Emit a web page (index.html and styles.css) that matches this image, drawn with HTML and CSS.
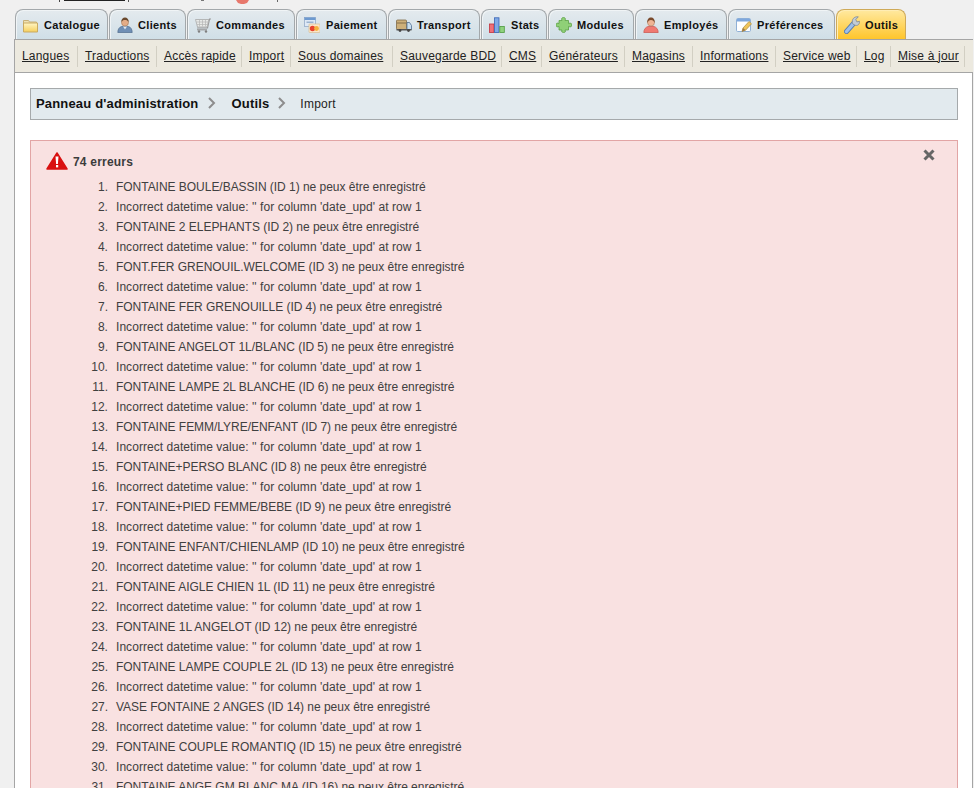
FILE: index.html
```html
<!DOCTYPE html>
<html lang="fr">
<head>
<meta charset="utf-8">
<title>Import - Outils</title>
<link rel="stylesheet" href="styles.css">
</head>
<body>
<svg class="top-strip" width="974" height="9" viewBox="0 0 974 9" aria-hidden="true">
  <rect x="64" y="0" width="61" height="1" fill="#222"/>
  <rect x="59" y="0" width="1" height="2" fill="#444"/>
  <rect x="128" y="0" width="1" height="2" fill="#555"/>
  <rect x="201" y="0" width="3" height="1" fill="#777"/>
  <path d="M236 0h13l-2 3-3 1h-3l-3-1z" fill="#e8786c"/>
  <rect x="277" y="0" width="1" height="2" fill="#666"/>
</svg>
<div class="wrapper">
  <nav class="tabs">
    <a class="tab tab-catalogue" href="#">
      <svg class="ico" viewBox="0 0 16 16"><defs><linearGradient id="gf" x1="0" y1="0" x2="0" y2="1"><stop offset="0" stop-color="#fff6c6"/><stop offset="1" stop-color="#f6cf5c"/></linearGradient></defs><path d="M.5 3.500h5l1 1.500h7v2h-13z" fill="#efe2b4" stroke="#c8b179"/><path d="M.5 6h14v9h-14z" fill="url(#gf)" stroke="#c9aa62"/></svg>
      Catalogue</a>
    <a class="tab tab-clients" href="#">
      <svg class="ico" viewBox="0 0 16 16"><path d="M.8 15.500c0-3.500 1.700-5.500 3.700-6h7c2 .5 3.700 2.500 3.700 6z" fill="#6f8fb5" stroke="#4f6b8c" stroke-width=".7"/><path d="M6 9.500l2 3 2-3z" fill="#dfe6ee"/><circle cx="8" cy="5.500" r="3.500" fill="#e4ac86" stroke="#a57653" stroke-width=".6"/><path d="M4.300 5c0-3 1.600-4.500 3.700-4.500S11.700 2 11.700 5c-1-1.500-2-2-3.700-2S5.300 3.500 4.300 5z" fill="#6b4a2e"/></svg>
      Clients</a>
    <a class="tab tab-commandes" href="#">
      <svg class="ico" viewBox="0 0 16 16"><path d="M2 11h10.500l2-9h1.500" fill="none" stroke="#999" stroke-width="1.200"/><path d="M.5 2.500h13.300l-1.700 7.500H2.500z" fill="#e8eae8" stroke="#a8a8a8" stroke-width=".8"/><path d="M1.500 5h11.500M2 7.500h10.500M4.500 3v6.500M7.500 3v6.500M10.500 3v6.500" stroke="#b4b4b4" stroke-width=".7" fill="none"/><path d="M2 12.800h10" stroke="#999" stroke-width="1.200"/><circle cx="4" cy="14.500" r="1.200" fill="#808080"/><circle cx="11" cy="14.500" r="1.200" fill="#808080"/></svg>
      Commandes</a>
    <a class="tab tab-paiement" href="#">
      <svg class="ico" viewBox="0 0 16 16"><rect x=".5" y=".5" width="11" height="9" fill="#dfe9f5" stroke="#8aa3c4" stroke-width=".7"/><rect x=".5" y=".5" width="11" height="2.500" fill="#6d9ad0"/><rect x="2.500" y="4.500" width="7" height="1.500" fill="#9bb3cf"/><rect x="5" y="7" width="11" height="8.500" rx=".7" fill="#fbe6c9" stroke="#d9bd91" stroke-width=".7"/><circle cx="8.500" cy="11.500" r="2.700" fill="#e8432e"/><circle cx="12.500" cy="11.500" r="2.400" fill="#f5b13c"/></svg>
      Paiement</a>
    <a class="tab tab-transport" href="#">
      <svg class="ico" viewBox="0 0 16 16"><rect x=".5" y="3" width="10" height="9.500" rx="1" fill="#cdb07a" stroke="#7d6a46" stroke-width=".8"/><path d="M1 6h9" stroke="#8f7a52" stroke-width="1.200"/><path d="M11 5.500h2.500l2 3v4H11z" fill="#c9dff0" stroke="#4f6f93" stroke-width=".8"/><rect x=".5" y="12" width="15" height="1.500" fill="#555"/><circle cx="4" cy="13.500" r="1.400" fill="#444"/><circle cx="12.500" cy="13.500" r="1.400" fill="#444"/></svg>
      Transport</a>
    <a class="tab tab-stats" href="#">
      <svg class="ico" viewBox="0 0 16 16"><rect x=".5" y="7" width="4.500" height="8.500" fill="#ef6f78" stroke="#c0313c" stroke-width=".8"/><rect x="5.500" y=".8" width="4.500" height="14.700" fill="#7fa9e6" stroke="#3763b4" stroke-width=".8"/><rect x="10.800" y="9.500" width="4.500" height="6" fill="#8fd27e" stroke="#4d9a3e" stroke-width=".8"/></svg>
      Stats</a>
    <a class="tab tab-modules" href="#">
      <svg class="ico" viewBox="0 0 16 16"><path d="M6 3.500c-1-2 0-3 1.500-3s2.500 1 1.500 3h3.500v3c2-1 3.500 0 3.500 1.500s-1.500 2.500-3.500 1.500v3.500H9c1 2 0 2.500-1.500 2.500S5 14.500 6 13H3V9.500c-2 1-3 0-3-1.500s1-2.500 3-1.500v-3z" fill="#8fd077" stroke="#5aa044" stroke-width=".8"/></svg>
      Modules</a>
    <a class="tab tab-employes" href="#">
      <svg class="ico" viewBox="0 0 16 16"><path d="M.8 15.500c0-3.500 2.200-5.500 4.200-6h6c2 .5 4.200 2.500 4.200 6z" fill="#f07a72" stroke="#c9534c" stroke-width=".7"/><circle cx="8" cy="5.500" r="3.500" fill="#efb494" stroke="#b07f62" stroke-width=".6"/><path d="M4.300 6c-.4-3.500 1.400-5.500 3.700-5.500s4.100 2 3.700 5.500c-.7-2-1.700-3-3.700-3S5 4 4.300 6z" fill="#7a4a2c"/></svg>
      Employés</a>
    <a class="tab tab-preferences" href="#">
      <svg class="ico" viewBox="0 0 16 16"><rect x=".5" y="1.500" width="14" height="13" rx="1.200" fill="#fff" stroke="#8fb0d6"/><rect x="1" y="1.800" width="13" height="2.700" fill="#7ea8de"/><path d="M6 14.500l1-3.500 6-6.500 2.500 2.300-6 6.500z" fill="#f0c55a" stroke="#a98a3c" stroke-width=".7"/><path d="M6 14.500l1-3.500 2.500 2.300z" fill="#9a7a4a"/></svg>
      Préférences</a>
    <a class="tab tab-outils active" href="#">
      <svg class="ico ico-tall" viewBox="0 0 16 18"><path d="M2.500 15.500L10 7" stroke="#587cae" stroke-width="5" stroke-linecap="round" fill="none"/><path d="M2.500 15.500L10 7" stroke="#9dbfe9" stroke-width="3.400" stroke-linecap="round" fill="none"/><path d="M8.700 7.800C7.200 3.500 10 .3 14.300.8L11.800 3.500l1.100 2.400 2.600-.6c.3 3.900-3.100 5.700-6.800 2.500z" fill="#c3ccd4" stroke="#7d8894" stroke-width=".8"/></svg>
      Outils</a>
  </nav>
  <div class="subnav">
    <a href="#">Langues</a>
    <a href="#">Traductions</a>
    <a href="#">Accès rapide</a>
    <a href="#">Import</a>
    <a href="#">Sous domaines</a>
    <a href="#">Sauvegarde BDD</a>
    <a href="#">CMS</a>
    <a href="#">Générateurs</a>
    <a href="#">Magasins</a>
    <a href="#">Informations</a>
    <a href="#">Service web</a>
    <a href="#">Log</a>
    <a href="#">Mise à jour</a>
  </div>
  <main class="content">
    <div class="breadcrumb">
      <strong>Panneau d'administration</strong>
      <svg class="chev" viewBox="0 0 10 12"><path d="M2 1l5 5-5 5" fill="none" stroke="#8d8d8d" stroke-width="2"/></svg>
      <strong>Outils</strong>
      <svg class="chev chev-last" viewBox="0 0 10 12"><path d="M2 1l5 5-5 5" fill="none" stroke="#8d8d8d" stroke-width="2"/></svg>
      <span class="crumb-current">Import</span>
    </div>
    <section class="error">
      <svg class="close" viewBox="0 0 12 12"><path d="M1.500 1.500l9 9M10.500 1.500l-9 9" stroke="#666" stroke-width="3"/></svg>
      <h3 class="error-title">
        <svg class="warn" viewBox="0 0 22 18"><path d="M11 1L21 17H1z" fill="#d91010" stroke="#d91010" stroke-width="1.500" stroke-linejoin="round"/><path d="M9.500 4.500h3l-.6 7.500h-1.800z" fill="#fff"/><rect x="10" y="13" width="2.200" height="2.400" fill="#fff"/></svg>
        74 erreurs
      </h3>
      <ol class="error-list">
        <li>FONTAINE BOULE/BASSIN (ID 1) ne peux être enregistré</li>
        <li>Incorrect datetime value: '' for column 'date_upd' at row 1</li>
        <li>FONTAINE 2 ELEPHANTS (ID 2) ne peux être enregistré</li>
        <li>Incorrect datetime value: '' for column 'date_upd' at row 1</li>
        <li>FONT.FER GRENOUIL.WELCOME (ID 3) ne peux être enregistré</li>
        <li>Incorrect datetime value: '' for column 'date_upd' at row 1</li>
        <li>FONTAINE FER GRENOUILLE (ID 4) ne peux être enregistré</li>
        <li>Incorrect datetime value: '' for column 'date_upd' at row 1</li>
        <li>FONTAINE ANGELOT 1L/BLANC (ID 5) ne peux être enregistré</li>
        <li>Incorrect datetime value: '' for column 'date_upd' at row 1</li>
        <li>FONTAINE LAMPE 2L BLANCHE (ID 6) ne peux être enregistré</li>
        <li>Incorrect datetime value: '' for column 'date_upd' at row 1</li>
        <li>FONTAINE FEMM/LYRE/ENFANT (ID 7) ne peux être enregistré</li>
        <li>Incorrect datetime value: '' for column 'date_upd' at row 1</li>
        <li>FONTAINE+PERSO BLANC (ID 8) ne peux être enregistré</li>
        <li>Incorrect datetime value: '' for column 'date_upd' at row 1</li>
        <li>FONTAINE+PIED FEMME/BEBE (ID 9) ne peux être enregistré</li>
        <li>Incorrect datetime value: '' for column 'date_upd' at row 1</li>
        <li>FONTAINE ENFANT/CHIENLAMP (ID 10) ne peux être enregistré</li>
        <li>Incorrect datetime value: '' for column 'date_upd' at row 1</li>
        <li>FONTAINE AIGLE CHIEN 1L (ID 11) ne peux être enregistré</li>
        <li>Incorrect datetime value: '' for column 'date_upd' at row 1</li>
        <li>FONTAINE 1L ANGELOT (ID 12) ne peux être enregistré</li>
        <li>Incorrect datetime value: '' for column 'date_upd' at row 1</li>
        <li>FONTAINE LAMPE COUPLE 2L (ID 13) ne peux être enregistré</li>
        <li>Incorrect datetime value: '' for column 'date_upd' at row 1</li>
        <li>VASE FONTAINE 2 ANGES (ID 14) ne peux être enregistré</li>
        <li>Incorrect datetime value: '' for column 'date_upd' at row 1</li>
        <li>FONTAINE COUPLE ROMANTIQ (ID 15) ne peux être enregistré</li>
        <li>Incorrect datetime value: '' for column 'date_upd' at row 1</li>
        <li>FONTAINE ANGE GM BLANC MA (ID 16) ne peux être enregistré</li>
      </ol>
    </section>
  </main>
</div>
</body>
</html>
```

FILE: styles.css
```css
* { box-sizing: border-box; }
html, body { margin: 0; padding: 0; }
body {
  background: #f0f0f0;
  font-family: "Liberation Sans", Arial, sans-serif;
  font-size: 12px;
  color: #333;
}
.top-strip { display: block; }
.wrapper { margin-left: 14px; width: 959px; }
.tabs { display: flex; padding-left: 1px; height: 30px; }
.tab {
  display: flex;
  align-items: center;
  gap: 5px;
  height: 30px;
  margin-right: 1px;
  padding: 0 0 0 7px;
  border: 1px solid #a3a8ab;
  border-bottom: 0;
  border-radius: 8px 8px 0 0;
  background: linear-gradient(#e4eaee, #d0dfe7);
  box-shadow: inset 1px 1px 0 #f0f4f6;
  color: #111;
  font-size: 11px;
  font-weight: bold;
  letter-spacing: .32px;
  text-decoration: none;
  white-space: nowrap;
}
.tab.active {
  background: linear-gradient(#ffe9a0, #ffc52b);
  border-color: #cfaa58;
  box-shadow: inset 1px 1px 0 #ffedb4;
}
.ico { width: 16px; height: 16px; flex: none; }
.ico-tall { height: 18px; }
.tab-catalogue { width: 93px; }
.tab-clients { width: 77px; }
.tab-commandes { width: 108px; }
.tab-paiement { width: 91px; gap: 6px; }
.tab-transport { width: 92px; }
.tab-stats { width: 66px; gap: 6px; }
.tab-modules { width: 86px; }
.tab-employes { width: 92px; }
.tab-preferences { width: 107px; }
.tab-outils { width: 70px; margin-right: 0; }
.subnav {
  display: grid;
  grid-template-columns: 63px 79px 85px 49px 102px 109px 40px 83px 68px 83px 81px 34px 74px;
  align-items: center;
  height: 34px;
  background: #ece9df;
  border: 1px solid #a5a5a5;
  border-width: 1px 0 1px 1px;
}
.subnav a {
  height: 21px;
  padding-left: 7px;
  border-right: 1px solid #d2cfc3;
  line-height: 20px;
  color: #222;
  letter-spacing: .2px;
  white-space: nowrap;
}
.content {
  background: #fff;
  border-left: 1px solid #a5a5a5;
  border-right: 1px solid #a5a5a5;
  padding: 15px 14px 20px 15px;
  min-height: 716px;
}
.breadcrumb {
  display: flex;
  align-items: center;
  height: 32px;
  padding: 0 5px 2px;
  background: #e2eaee;
  border: 1px solid #a5a9ab;
  color: #222;
}
.breadcrumb strong { font-size: 13px; color: #111; letter-spacing: .17px; }
.crumb-current { padding-top: 2px; letter-spacing: .25px; }
.chev { width: 10px; height: 12px; margin: 0 14px 0 9px; flex: none; }
.chev-last { margin: 0 13px 0 8px; }
.error {
  position: relative;
  margin-top: 20px;
  padding: 0 15px 15px;
  background: #f9e1e1;
  border: 1px solid #e2a5a5;
}
.error-title {
  display: flex;
  align-items: center;
  gap: 5px;
  height: 36px;
  margin: 0;
  padding-top: 6px;
  font-size: 12px;
  font-weight: bold;
  letter-spacing: .2px;
  color: #3c3c3c;
}
.warn { width: 22px; height: 18px; flex: none; margin-top: -3px; }
.error-list {
  margin: 0;
  padding: 0 0 0 32px;
  list-style: none;
  counter-reset: item;
  color: #404040;
}
.error-list li {
  display: flex;
  height: 20px;
  line-height: 20px;
  counter-increment: item;
  letter-spacing: -.03px;
}
.error-list li:nth-child(even) { letter-spacing: .05px; }
.error-list li::before {
  content: counter(item) ".";
  flex: none;
  width: 30px;
  margin-right: 8px;
  text-align: right;
}
.close { position: absolute; top: 8px; right: 22px; width: 12px; height: 12px; }
```
